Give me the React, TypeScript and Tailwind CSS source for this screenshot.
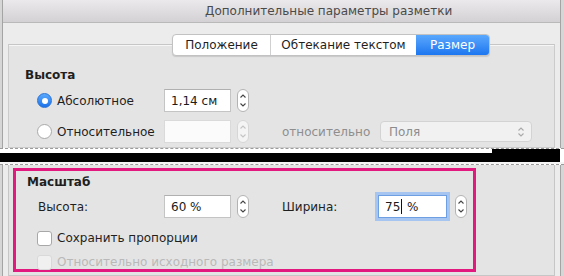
import React from "react";

const Stepper = ({ disabled = false }: { disabled?: boolean }) => (
  <svg width="12" height="23" viewBox="0 0 12 23" className="shrink-0">
    <rect
      x="0.5"
      y="0.5"
      width="11"
      height="22"
      rx="5.5"
      fill={disabled ? "#f4f4f4" : "#ffffff"}
      stroke={disabled ? "#d6d6d6" : "#b3b3b3"}
    />
    <path
      d="M3.5 8.5 L6 6 L8.5 8.5"
      fill="none"
      stroke={disabled ? "#c4c4c4" : "#444"}
      strokeWidth="1.1"
    />
    <path
      d="M3.5 14.5 L6 17 L8.5 14.5"
      fill="none"
      stroke={disabled ? "#c4c4c4" : "#444"}
      strokeWidth="1.1"
    />
  </svg>
);

const Field = ({
  value,
  disabled = false,
  focused = false,
  width = "w-[67px]",
}: {
  value?: React.ReactNode;
  disabled?: boolean;
  focused?: boolean;
  width?: string;
}) => (
  <div
    className={`${width} h-[23px] flex items-center px-[6px] whitespace-pre ${
      disabled
        ? "bg-[#fbfbfb] border border-[#dadada] text-[#aaa]"
        : focused
          ? "bg-white border border-[#6f9fe3] shadow-[0_0_0_3px_#a6c6f1] text-[#1b1b1b]"
          : "bg-white border border-[#c4c4c4] border-t-[#b0b0b0] text-[#1b1b1b]"
    }`}
  >
    {value}
  </div>
);

const Radio = ({ checked }: { checked: boolean }) =>
  checked ? (
    <div className="w-[15px] h-[15px] rounded-full bg-gradient-to-b from-[#5aa9fd] to-[#1a72ea] border border-[#2a73d6] flex items-center justify-center shrink-0">
      <div className="w-[6px] h-[6px] rounded-full bg-white" />
    </div>
  ) : (
    <div className="w-[15px] h-[15px] rounded-full bg-white border border-[#a9a9a9] shrink-0" />
  );

const Checkbox = ({ disabled = false }: { disabled?: boolean }) => (
  <div
    className={`w-[15px] h-[15px] rounded-[3px] shrink-0 ${
      disabled ? "bg-[#f0f0f0] border border-[#d9d9d9]" : "bg-white border border-[#a8a8a8]"
    }`}
  />
);

export default function App() {
  return (
    <div className="w-[564px] h-[276px] overflow-hidden bg-[#d6d6d6] font-['DejaVu_Sans',sans-serif] text-[12px] text-[#1f1f1f] flex flex-col">
      {/* upper part of the window */}
      <div className="h-[148px] overflow-hidden shrink-0 ml-[2px] w-[559px] border-l border-r border-[#a4a4a4] bg-[#ececec] flex flex-col">
        <div className="h-[23px] shrink-0 bg-gradient-to-b from-[#ebe9eb] to-[#d3d1d3] border-b border-[#b9b9b9] flex items-center pl-[202px] text-[#4a4a4a]">
          Дополнительные параметры разметки
        </div>
        <div className="relative z-10 mt-[11px] ml-[169px] flex h-[22px] w-[318px] rounded-[4px] border border-[#c2c2c2] bg-white shadow-[0_1px_1px_rgba(0,0,0,0.12)] overflow-hidden">
          <div className="w-[98px] flex items-center justify-center border-r border-[#d0d0d0]">Положение</div>
          <div className="w-[145px] flex items-center justify-center">Обтекание текстом</div>
          <div className="flex-1 flex items-center justify-center text-white bg-gradient-to-b from-[#5aa8fc] to-[#1b76f0]">
            Размер
          </div>
        </div>
        <div className="-mt-[12px] ml-[5px] w-[547px] flex-1 border border-[#cbcbcb] border-t-[#c6c6c6] bg-[#e4e4e4] shadow-[inset_0_1px_0_#f6f6f6] pt-[22px] flex flex-col">
          <div className="pl-[16px] font-bold leading-[16px]">Высота</div>
          <div className="mt-[6px] pl-[28px] flex items-center">
            <div className="w-[127px] flex items-center gap-[5px]">
              <Radio checked />
              <span>Абсолютное</span>
            </div>
            <Field value="1,14 см" />
            <div className="ml-[6px]">
              <Stepper />
            </div>
          </div>
          <div className="mt-[8px] pl-[28px] flex items-center">
            <div className="w-[127px] flex items-center gap-[5px]">
              <Radio checked={false} />
              <span>Относительное</span>
            </div>
            <Field disabled />
            <div className="ml-[6px]">
              <Stepper disabled />
            </div>
            <span className="ml-[33px] w-[98px] text-[#8e8e8e]">относительно</span>
            <div className="w-[152px] h-[21px] rounded-[4px] border border-[#d3d3d3] bg-[#f1f1f1] flex items-center justify-between pl-[8px] pr-[6px] text-[#8c8c8c]">
              <span>Поля</span>
              <svg width="8" height="12" viewBox="0 0 8 12">
                <path d="M1.5 4.5 L4 2 L6.5 4.5 M1.5 7.5 L4 10 L6.5 7.5" fill="none" stroke="#a9a9a9" strokeWidth="1.1" />
              </svg>
            </div>
          </div>
        </div>
      </div>

      {/* torn edge */}
      <div className="h-[17px] shrink-0 bg-white flex flex-col">
        <div className="h-px border-t border-dashed border-[#9a9a9a]" />
        <div className="flex h-[4px]">
          <div className="w-[492px] bg-white" />
          <div className="w-[68px] bg-black" />
        </div>
        <div className="h-[9px] w-[560px] bg-black" />
        <div className="h-[2px] bg-[#f4f4f4]" />
        <div className="h-px border-t border-dashed border-[#9a9a9a]" />
      </div>

      {/* lower part of the window */}
      <div className="flex-1 ml-[2px] w-[559px] border-l border-r border-[#a4a4a4] bg-[#ececec] flex flex-col">
        <div className="ml-[5px] w-[547px] flex-1 border-l border-r border-b border-[#c6c6c6] bg-[#e4e4e4] pt-[3px] pl-[4px]">
          <div className="w-[463px] h-[104px] border-[3px] border-[#e2197f] pl-[11px] pt-[3px] flex flex-col">
            <div className="font-bold leading-[16px]">Масштаб</div>
            <div className="mt-[5px] flex items-center">
              <span className="ml-[11px] w-[126px]">Высота:</span>
              <Field value="60 %" />
              <div className="ml-[6px]">
                <Stepper />
              </div>
              <span className="ml-[33px] w-[96px]">Ширина:</span>
              <Field
                focused
                width="w-[69px]"
                value={
                  <>
                    75
                    <span className="inline-block w-px h-[15px] bg-[#111] mx-[1px]" />
                    {" %"}
                  </>
                }
              />
              <div className="ml-[8px]">
                <Stepper />
              </div>
            </div>
            <div className="mt-[11px] ml-[10px] flex items-center gap-[5px]">
              <Checkbox />
              <span>Сохранить пропорции</span>
            </div>
            <div className="mt-[6px] ml-[10px] flex items-center gap-[5px]">
              <Checkbox disabled />
              <span className="text-[#b9b9b9]">Относительно исходного размера</span>
            </div>
          </div>
        </div>
      </div>
    </div>
  );
}
